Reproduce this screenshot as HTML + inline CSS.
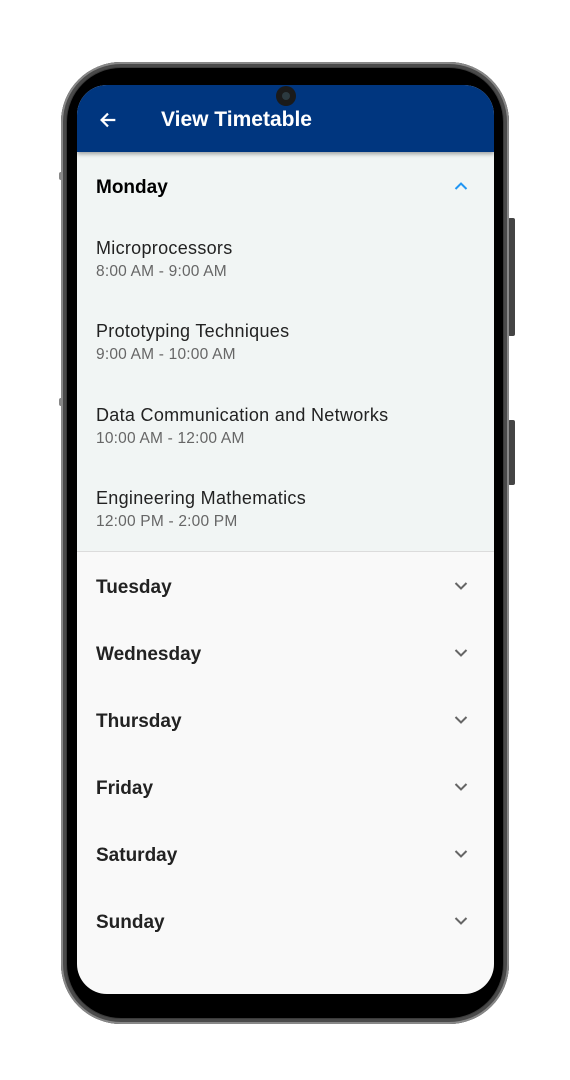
<!DOCTYPE html>
<html><head><style>
body{margin:0;width:570px;height:1080px;background:#fff;position:relative;overflow:hidden;font-family:"Liberation Sans",Roboto,sans-serif}
.frame{position:absolute;left:61px;top:62px;width:448px;height:962px;border-radius:60px;background:#3a3a3a;box-shadow:inset 0 0 0 2px #888,inset 0 0 0 5px #4a4a4a}
.bezel{position:absolute;left:67px;top:68px;width:436px;height:950px;border-radius:54px;background:#000}
.screen{position:absolute;left:77px;top:85px;width:417px;height:909px;border-radius:30px;overflow:hidden;background:#f9f9f9}
.btn{position:absolute;background:#444;border-radius:2px}
.bar{position:absolute;left:0;top:0;width:417px;height:67px;background:#00367f;box-shadow:0 2px 4px rgba(0,0,0,.35);z-index:2}
.title{position:absolute;left:84px;top:23px;color:#fff;font-size:21px;font-weight:bold}
.cam{position:absolute;left:276px;top:86px;width:20px;height:20px;border-radius:50%;background:#1a1a1a;z-index:5}
.cam:after{content:"";position:absolute;left:6px;top:6px;width:8px;height:8px;border-radius:50%;background:#2c3a40}
.exp{position:absolute;left:0;top:67px;width:417px;height:399px;background:#f1f5f4;border-bottom:1px solid #dcdcdc}
.day{position:absolute;left:19px;font-size:19px;font-weight:bold;color:#222}
.it{position:absolute;left:19px}
.it b{display:block;font-weight:normal;font-size:18px;letter-spacing:0.3px;color:#222}
.it i{display:block;font-style:normal;font-size:15.5px;letter-spacing:0.2px;color:#666;margin-top:4px}
.chev{position:absolute;left:377px;width:14px;height:10px}
</style></head><body>
<div class="btn" style="left:508px;top:218px;width:7px;height:118px"></div>
<div class="btn" style="left:508px;top:420px;width:7px;height:65px"></div>
<div class="btn" style="left:59px;top:172px;width:4px;height:8px;background:#888"></div>
<div class="btn" style="left:59px;top:398px;width:4px;height:8px;background:#888"></div>
<div class="frame"></div>
<div class="bezel"></div>
<div class="cam"></div>
<div class="screen">
<div class="bar">
<svg style="position:absolute;left:20px;top:24px" width="22" height="22" viewBox="0 0 24 24"><path d="M20 12H5M12 5l-7 7 7 7" stroke="#fff" stroke-width="2.4" fill="none"/></svg>
<div class="title">View Timetable</div>
</div>
<div class="exp"></div>
<div class="day" style="top:92px;color:#000">Monday</div>
<svg class="chev" style="top:96px" viewBox="0 0 14 10"><path d="M1.5 8L7 2.5 12.5 8" stroke="#2196f3" stroke-width="2" fill="none"/></svg>
<div class="it" style="top:153px"><b>Microprocessors</b><i>8:00 AM - 9:00 AM</i></div>
<div class="it" style="top:236px"><b>Prototyping Techniques</b><i>9:00 AM - 10:00 AM</i></div>
<div class="it" style="top:320px"><b>Data Communication and Networks</b><i>10:00 AM - 12:00 AM</i></div>
<div class="it" style="top:403px"><b>Engineering Mathematics</b><i>12:00 PM - 2:00 PM</i></div>
<div class="day" style="top:492px">Tuesday</div>
<div class="day" style="top:559px">Wednesday</div>
<div class="day" style="top:626px">Thursday</div>
<div class="day" style="top:693px">Friday</div>
<div class="day" style="top:760px">Saturday</div>
<div class="day" style="top:827px">Sunday</div>
<svg class="chev" style="top:496px" viewBox="0 0 14 10"><path d="M1.5 2L7 7.5 12.5 2" stroke="#666" stroke-width="2" fill="none"/></svg>
<svg class="chev" style="top:563px" viewBox="0 0 14 10"><path d="M1.5 2L7 7.5 12.5 2" stroke="#666" stroke-width="2" fill="none"/></svg>
<svg class="chev" style="top:630px" viewBox="0 0 14 10"><path d="M1.5 2L7 7.5 12.5 2" stroke="#666" stroke-width="2" fill="none"/></svg>
<svg class="chev" style="top:697px" viewBox="0 0 14 10"><path d="M1.5 2L7 7.5 12.5 2" stroke="#666" stroke-width="2" fill="none"/></svg>
<svg class="chev" style="top:764px" viewBox="0 0 14 10"><path d="M1.5 2L7 7.5 12.5 2" stroke="#666" stroke-width="2" fill="none"/></svg>
<svg class="chev" style="top:831px" viewBox="0 0 14 10"><path d="M1.5 2L7 7.5 12.5 2" stroke="#666" stroke-width="2" fill="none"/></svg>
</div>
</body></html>
